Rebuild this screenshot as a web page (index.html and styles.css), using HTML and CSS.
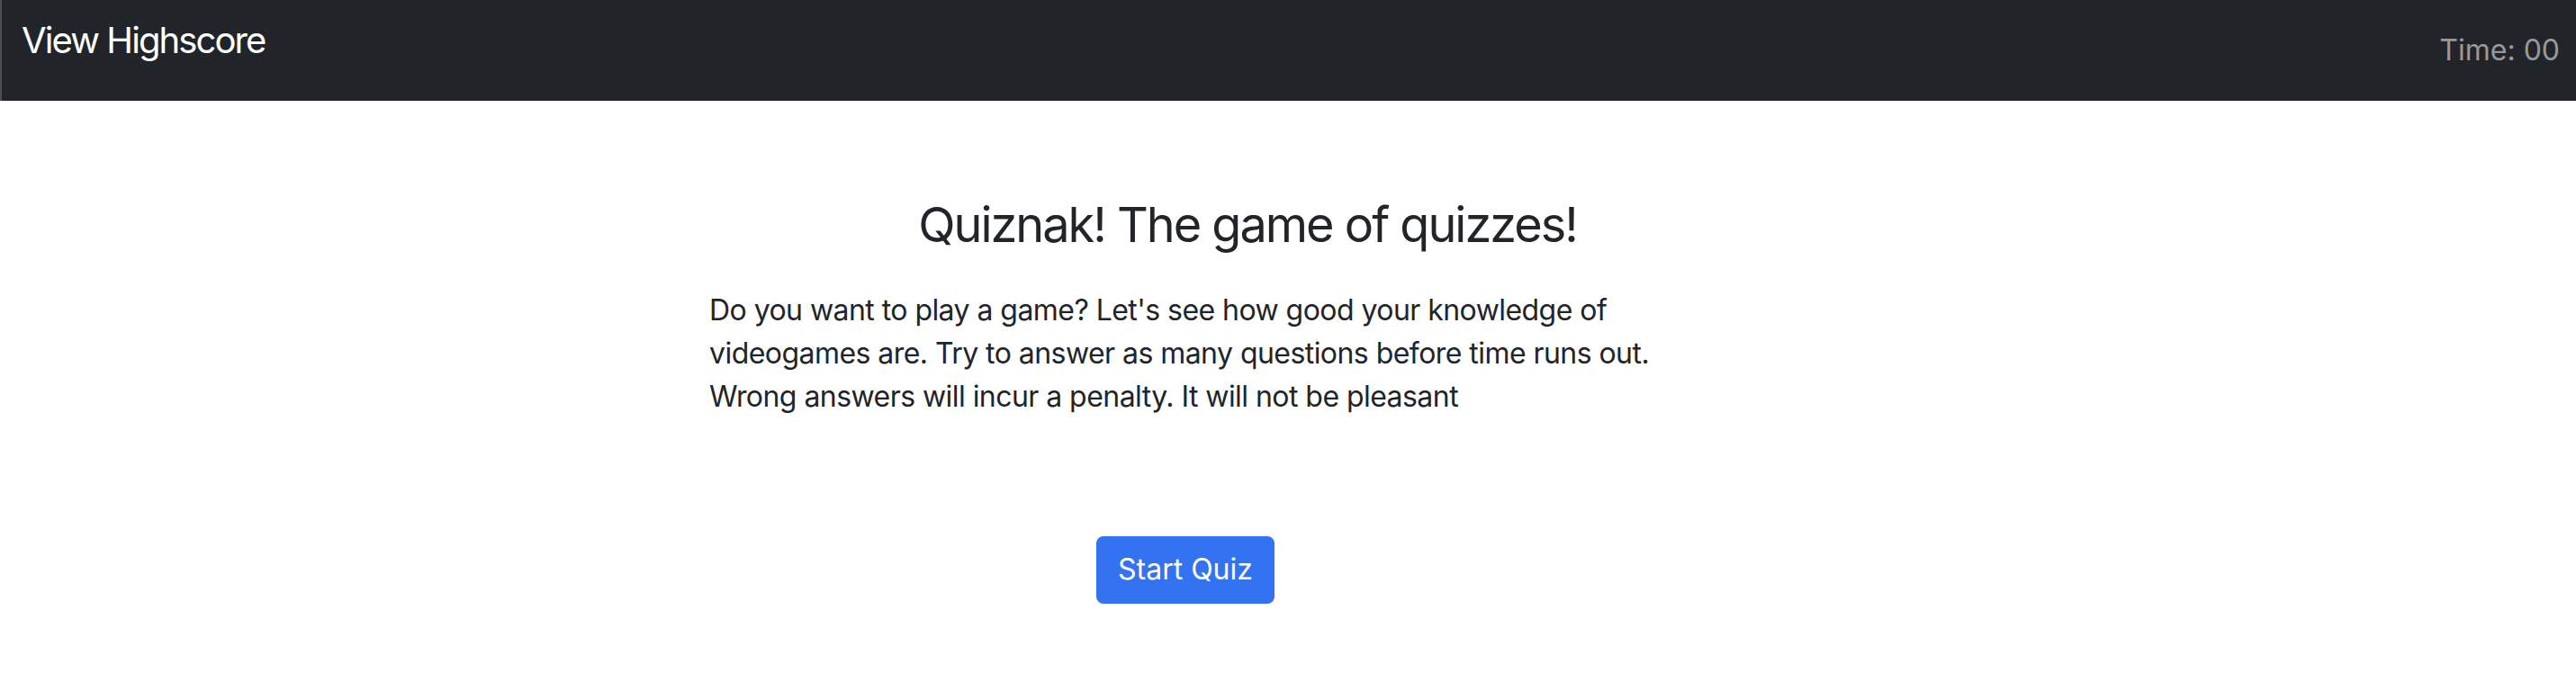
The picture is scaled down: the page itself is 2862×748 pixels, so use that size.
FILE: index.html
```html
<!DOCTYPE html>
<html lang="en">
<head>
<meta charset="utf-8">
<title>Quiznak</title>
<link rel="stylesheet" href="styles.css">
</head>
<body>
<header class="navbar">
  <a class="brand" href="#">View Highscore</a>
  <span class="timer">Time: 00</span>
</header>
<main class="intro">
  <h3 class="title">Quiznak! The game of quizzes!</h3>
  <p class="lead-text">Do you want to play a game? Let's see how good your knowledge of videogames are. Try to answer as many questions before time runs out. Wrong answers will incur a penalty. It will not be pleasant</p>
  <div class="actions">
    <button class="btn-start" type="button">Start Quiz</button>
  </div>
</main>
</body>
</html>
```
FILE: styles.css
```css
html, body {
  margin: 0;
  padding: 0;
  background: #ffffff;
  font-family: Inter, "Noto Sans", "Liberation Sans", sans-serif;
  color: #212529;
}

.navbar {
  height: 112px;
  box-sizing: border-box;
  background: #212529;
  border-left: 2px solid #4b4f54;
  display: flex;
  justify-content: space-between;
  align-items: flex-start;
  padding: 15px 18px 0 22px;
}

.brand {
  color: #ffffff;
  text-decoration: none;
  font-size: 40px;
  line-height: 60px;
  letter-spacing: -1.9px;
}

.timer {
  color: rgba(255, 255, 255, 0.55);
  font-size: 32px;
  line-height: 48px;
  margin-top: 17px;
}

.intro {
  width: 1200px;
  margin-left: 786px;
  padding-top: 106px;
}

.title {
  margin: 0;
  font-size: 54px;
  font-weight: 400;
  line-height: 1.2;
  letter-spacing: -2px;
  text-align: center;
}

.lead-text {
  margin: 38px 0 0 2px;
  width: 1070px;
  font-size: 32px;
  line-height: 48px;
  letter-spacing: -0.55px;
}

.actions {
  margin-top: 130px;
  padding-left: 432px;
}

.btn-start {
  height: 75px;
  box-sizing: border-box;
  padding: 0 24px;
  border: none;
  border-radius: 8px;
  background: #3373f2;
  color: #ffffff;
  font-family: inherit;
  font-size: 32px;
  line-height: 48px;
  margin-top: 1px;
}
```
